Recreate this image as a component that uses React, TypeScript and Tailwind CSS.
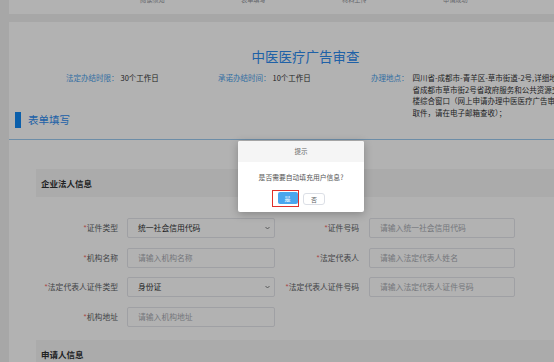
import React from "react";

const steps = ["阅读须知", "表单填写", "材料上传", "申请成功"];

type Field = { label: string; kind: "select" | "input"; text: string } | null;

const rows: [Field, Field][] = [
  [
    { label: "证件类型", kind: "select", text: "统一社会信用代码" },
    { label: "证件号码", kind: "input", text: "请输入统一社会信用代码" },
  ],
  [
    { label: "机构名称", kind: "input", text: "请输入机构名称" },
    { label: "法定代表人", kind: "input", text: "请输入法定代表人姓名" },
  ],
  [
    { label: "法定代表人证件类型", kind: "select", text: "身份证" },
    { label: "法定代表人证件号码", kind: "input", text: "请输入法定代表人证件号码" },
  ],
  [{ label: "机构地址", kind: "input", text: "请输入机构地址" }, null],
];

function FormCell({ field, labelWidth, inputWidth, gap }: { field: Field; labelWidth: string; inputWidth: string; gap: string }) {
  if (!field) return <div />;
  return (
    <div className={`flex items-center ${gap}`}>
      <label className={`${labelWidth} shrink-0 text-right text-[7.8px] text-[#606266] whitespace-nowrap`}>
        <span className="text-[#f56c6c]">*</span>
        {field.label}
      </label>
      <div
        className={`${inputWidth} h-[20px] shrink-0 flex items-center justify-between rounded-[2px] border border-[#e4e6eb] bg-white pl-[10px] pr-[4px]`}
      >
        <span className={`text-[7.8px] ${field.kind === "select" ? "text-[#303133]" : "text-[#a8abb2]"}`}>{field.text}</span>
        {field.kind === "select" && (
          <svg width="5" height="4" viewBox="0 0 10 6" className="text-[#606266]">
            <path d="M1 1l4 4 4-4" fill="none" stroke="currentColor" strokeWidth="1.6" />
          </svg>
        )}
      </div>
    </div>
  );
}

function SectionBox({ title }: { title: string }) {
  return (
    <div className="ml-[27px] mr-[27px] h-[28px] flex items-center bg-[#f5f5f5] pl-[5px]">
      <span className="text-[8.5px] font-bold text-[#303133]">{title}</span>
    </div>
  );
}

export default function App() {
  return (
    <div className="relative w-[554px] h-[362px] overflow-hidden bg-[#f0f0f0] font-['Noto_Sans_CJK_SC','Liberation_Sans',sans-serif]">
      <div className="w-[602px] pl-[9px]">
        {/* 步骤条 */}
        <div className="h-[14px] overflow-hidden bg-white">
          <div className="-mt-[4px] flex pl-[131px]">
            {steps.map((s) => (
              <span key={s} className="w-[101px] text-[6.2px] leading-[8px] text-[#909399]">
                {s}
              </span>
            ))}
          </div>
        </div>
        <div className="h-[8px]" />

        {/* 主体 */}
        <div className="bg-white pt-[24px] h-[400px]">
          <h1 className="text-center text-[13.5px] leading-[20px] text-[#2d8cf0]">中医医疗广告审查</h1>

          <div className="mt-[6px] h-[34px] flex pl-[57px] text-[7.5px] leading-[11.5px]">
            <div className="w-[152px] flex shrink-0">
              <span className="text-[#4a9eea]">法定办结时限：</span>
              <span className="ml-[2px] text-[#303133]">30个工作日</span>
            </div>
            <div className="w-[153px] flex shrink-0">
              <span className="text-[#4a9eea]">承诺办结时间：</span>
              <span className="ml-[2px] text-[#303133]">10个工作日</span>
            </div>
            <div className="flex shrink-0">
              <span className="text-[#4a9eea]">办理地点：</span>
              <div className="ml-[4px] text-[#303133] whitespace-nowrap">
                <div>四川省-成都市-青羊区-草市街道-2号,详细地址：四川</div>
                <div>省成都市草市街2号省政府服务和公共资源交易中心</div>
                <div>楼综合窗口（网上申请办理中医医疗广告审查事项的</div>
                <div>取件，请在电子邮箱查收）；</div>
              </div>
            </div>
          </div>

          <div className="mt-[6px] h-[16px] flex items-center pl-[6px]">
            <span className="w-[6px] h-[16px] bg-[#1189f5]" />
            <span className="ml-[7px] text-[10.5px] text-[#2d8cf0]">表单填写</span>
          </div>
          <div className="mt-[11px] h-px bg-[#9ccaf0]" />

          <div className="mt-[29px]">
            <SectionBox title="企业法人信息" />
          </div>

          <div className="mt-[21px] grid grid-cols-[266px_240px] auto-rows-[20px] gap-y-[9.5px]">
            {rows.map(([l, r], i) => (
              <React.Fragment key={i}>
                <FormCell field={l} labelWidth="w-[109px]" inputWidth="w-[148px]" gap="gap-[9px]" />
                <FormCell field={r} labelWidth="w-[84px]" inputWidth="w-[146px]" gap="gap-[10px]" />
              </React.Fragment>
            ))}
          </div>

          <div className="mt-[13.5px]">
            <SectionBox title="申请人信息" />
          </div>
        </div>
      </div>

      {/* 遮罩 */}
      <div className="absolute inset-0 bg-black/30" />

      {/* 提示框 */}
      <div className="absolute left-[238px] top-[141px] w-[126px] h-[71px] bg-white rounded-[2px] shadow-[0_2px_8px_rgba(0,0,0,0.25)] overflow-hidden">
        <div className="h-[21px] flex items-center justify-center bg-[#f5f5f5] text-[6.5px] text-[#666]">提示</div>
        <div className="pt-[10px] text-center text-[6.8px] leading-[10px] text-[#555]">是否需要自动填充用户信息?</div>
        <div className="mt-[8px] flex items-start pl-[34px]">
          <div className="border-[1.5px] border-[#e0302a] pt-[1px] pb-[2px] pl-[4.5px] pr-[0.5px]">
            <button className="w-[20px] h-[12px] flex items-center justify-center rounded-[2px] bg-[#4aa6ee] text-[6px] text-white">
              是
            </button>
          </div>
          <button className="ml-[4px] mt-[3px] w-[22px] h-[12px] flex items-center justify-center rounded-[3px] border border-[#dcdfe6] bg-white text-[6px] text-[#606266]">
            否
          </button>
        </div>
      </div>
    </div>
  );
}
